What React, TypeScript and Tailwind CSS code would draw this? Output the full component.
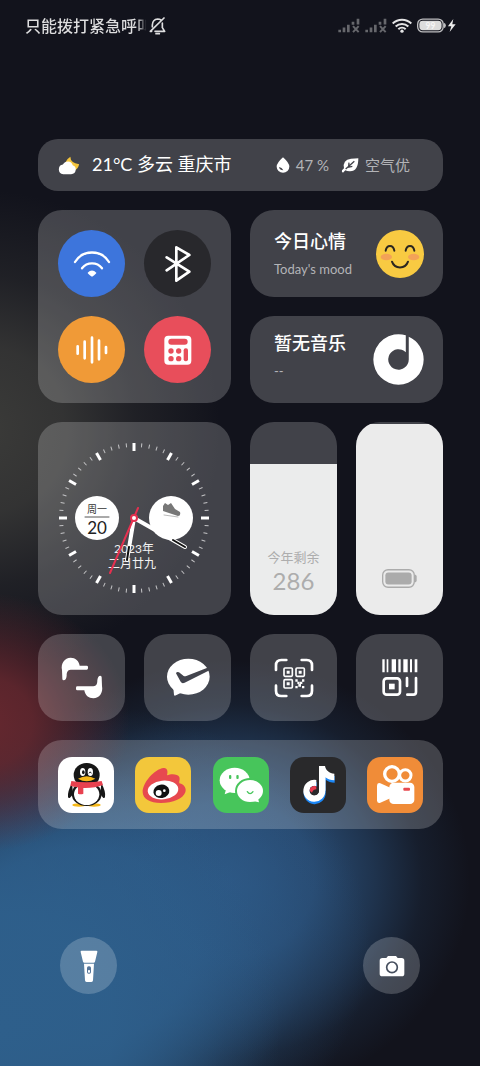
import React from "react";

const App = () => {
  return (
    <div className="flex min-h-screen flex-col bg-[#12131c] bg-[radial-gradient(150px_130px_at_-20px_722px,#66282f_0%,#66282fdd_35%,#66282f77_65%,#66282f00_100%),radial-gradient(240px_240px_at_-20px_430px,#3b3b39_0%,#3b3b39cc_35%,#3b3b3955_65%,#3b3b3900_100%),radial-gradient(280px_290px_at_0px_1030px,#2e5f8b_0%,#2e5f8be6_40%,#2e5f8b8c_60%,#2e5f8b33_80%,#2e5f8b00_100%),radial-gradient(290px_240px_at_80px_945px,#2d5b88_0%,#2d5b88e6_40%,#2d5b888c_60%,#2d5b8833_80%,#2d5b8800_100%),radial-gradient(240px_220px_at_230px_880px,#2c5480_0%,#2c5480d9_35%,#2c548080_60%,#2c54802b_80%,#2c548000_100%)] bg-no-repeat font-[Lato,'Noto_Sans_CJK_SC',sans-serif] text-white">
      <StatusBar />
      <main className="mt-[88px] flex flex-col gap-[19px] pr-[37px] pl-[38px]">
        <WeatherCard />
        <div className="grid grid-cols-2 gap-[19px]">
          <Toggles />
          <div className="flex flex-col gap-[19px]">
            <MoodCard />
            <MusicCard />
          </div>
          <ClockCard />
          <div className="grid grid-cols-2 gap-[19px]">
            <YearCard />
            <BatteryCard />
          </div>
        </div>
        <div className="grid grid-cols-4 gap-[19px]">
          {shortcuts.map((item) => (
            <button
              key={item.label}
              aria-label={item.label}
              className="flex h-[87px] items-center justify-center rounded-3xl bg-white/20"
            >
              <svg viewBox="-66 -66 132 132" className="size-11">
                {item.icon}
              </svg>
            </button>
          ))}
        </div>
        <nav className="flex h-[89px] items-center justify-between rounded-3xl bg-white/20 px-5">
          {apps.map((app) => (
            <a key={app.label} href="#" aria-label={app.label}>
              <svg viewBox="0 0 168 168" className="size-14">
                {app.icon}
              </svg>
            </a>
          ))}
        </nav>
      </main>
      <footer className="mt-auto flex justify-between px-[60px] pt-10 pb-[72px]">
        <button aria-label="手电筒" className="flex size-[57px] items-center justify-center rounded-full bg-white/20">
          <svg viewBox="-48 -48 96 96" className="size-8">
            <path d="M-22 -46H22Q26 -46 25 -42L18 -13Q17 -10 14 -10H-14Q-17 -10 -18 -13L-25 -42Q-26 -46 -22 -46Z" fill="#fff" />
            <path d="M-15 -7H15L12 43Q12 48 7 48H-7Q-12 48 -12 43Z" fill="#fff" />
            <rect x="-6" y="1" width="12" height="22" rx="5" fill="#56769a" />
            <rect x="-3" y="12" width="6" height="8" rx="2" fill="#fff" />
          </svg>
        </button>
        <button aria-label="相机" className="flex size-[57px] items-center justify-center rounded-full bg-white/20">
          <svg viewBox="-48 -48 96 96" className="size-8">
            <path
              d="M-29 -24H-17L-12 -30H12L17 -24H29Q37 -24 37 -16V23Q37 31 29 31H-29Q-37 31 -37 23V-16Q-37 -24 -29 -24Z"
              fill="#fff"
            />
            <circle cy="4" r="16" fill="#fff" stroke="#464f5e" strokeWidth="5" />
          </svg>
        </button>
      </footer>
    </div>
  );
};

const StatusBar = () => {
  return (
    <header className="flex h-[51px] items-center justify-between pr-6 pl-[25px]">
      <div className="flex items-center">
        <span className="bg-linear-to-r from-[#dededf] from-88% to-transparent to-95% bg-clip-text text-base font-medium whitespace-nowrap text-transparent">
          只能拨打紧急呼叫
        </span>
        <svg viewBox="0 0 51 54" className="-ml-1 h-[18px] w-[17px]" fill="none" stroke="#dededf" strokeWidth="5" strokeLinecap="round" strokeLinejoin="round">
          <path d="M10 30V24Q11 7 26 6Q32 6 36 9" />
          <path d="M40 18V32L47 43H18" />
          <path d="M45 3L4 43H8" />
          <path d="M21 50H31" />
        </svg>
      </div>
      <div className="flex items-center gap-[5px]">
        <SignalIcon />
        <SignalIcon />
        <svg viewBox="-30 -22 60 44" className="h-[15px] w-5" fill="none" stroke="#e4e4e5" strokeWidth="6">
          <path d="M-28 -6A40 40 0 0 1 28 -6" />
          <path d="M-19 3A27 27 0 0 1 19 3" />
          <path d="M-11 11A16 16 0 0 1 11 11" />
          <circle cy="17" r="5" fill="#e4e4e5" stroke="none" />
        </svg>
        <svg viewBox="0 0 116 44" className="h-[15px] w-[39px]">
          <rect x="2" y="3" width="76" height="38" rx="15" fill="none" stroke="#bebec0" strokeWidth="4" />
          <path d="M80 14Q86 16 86 22Q86 28 80 30Z" fill="#bebec0" />
          <rect x="7" y="8" width="66" height="28" rx="10" fill="#dcdcdc" />
          <text x="40" y="31" textAnchor="middle" fontSize="25" fontWeight="700" fill="#f6f6f6">
            99
          </text>
          <path d="M108 3L92 24H102L97 41L115 18H105Z" fill="#ececec" />
        </svg>
      </div>
    </header>
  );
};

const SignalIcon = () => (
  <svg viewBox="0 0 66 44" className="h-[15px] w-[22px]" fill="none" stroke="#66676c" strokeWidth="8">
    <path d="M5 42V35M18 42V28M31 42V20M45 20V11M60 19V2" />
    <path d="M45 24L62 42M62 24L45 42" strokeWidth="6" />
  </svg>
);

const WeatherCard = () => {
  return (
    <section className="flex h-[52px] items-center justify-between rounded-[20px] bg-white/20 pr-[33px] pl-5">
      <div className="flex items-center gap-3">
        <svg viewBox="0 0 64 56" className="h-[19px] w-[22px]">
          <path d="M36 2Q36 20 62 24Q58 42 42 44L22 18Q26 8 36 2Z" fill="#f5c53d" />
          <path d="M15 54Q2 52 2 39Q3 26 14 25Q19 16 29 16Q40 17 43 27Q52 30 52 40Q51 53 38 54Z" fill="#fff" />
        </svg>
        <span className="pb-0.5 text-lg">21°C 多云 重庆市</span>
      </div>
      <div className="flex items-center text-[15px] text-[#b3b4b7]">
        <svg viewBox="0 0 42 48" className="h-4 w-3.5">
          <path d="M21 1Q40 18 40 29A19 18 0 0 1 2 29Q2 18 21 1Z" fill="#fff" />
          <path d="M9 30Q11 40 22 40Q18 31 9 30Z" fill="#42434a" />
        </svg>
        <span className="ml-1.5">47 %</span>
        <svg viewBox="0 0 54 48" className="ml-3 h-4 w-[18px]">
          <path d="M52 4Q52 44 26 43Q18 43 13 40L6 47Q1 46 3 40L9 34Q4 8 30 5Q42 5 52 4Z" fill="#fff" />
          <path d="M14 36L40 13M23 28L24 17M20 31L34 28" stroke="#42434a" strokeWidth="4" fill="none" />
        </svg>
        <span className="ml-1.5">空气优</span>
      </div>
    </section>
  );
};

const Toggles = () => {
  return (
    <section className="grid h-[193px] grid-cols-[67px_67px] place-content-center gap-[19px] rounded-3xl bg-white/20">
      <button aria-label="无线网络" className="flex size-[67px] items-center justify-center rounded-full bg-[#3d75dc]">
        <svg viewBox="-60 -60 120 120" className="size-10" fill="none" stroke="#fff" strokeWidth="7" strokeLinecap="round">
          <path d="M-51 -6A60 60 0 0 1 51 -6" />
          <path d="M-30 13A38 38 0 0 1 30 13" />
          <path d="M-13 26Q0 13 13 26Q13 29 0 38Q-13 29 -13 26Z" fill="#fff" stroke="none" />
        </svg>
      </button>
      <button aria-label="蓝牙" className="flex size-[67px] items-center justify-center rounded-full bg-[#28282c]">
        <svg viewBox="-60 -60 120 120" className="size-10" fill="none" stroke="#fff" strokeWidth="8" strokeLinecap="round" strokeLinejoin="round">
          <path d="M-34 -20L34 23L-5 50V-50L34 -27L-34 19" />
        </svg>
      </button>
      <button aria-label="录音" className="flex size-[67px] items-center justify-center rounded-full bg-[#f09a37]">
        <svg viewBox="-60 -60 120 120" className="size-10" stroke="#fff" strokeWidth="8" strokeLinecap="round">
          <path d="M-43 -11V11M-22 -25V25M0 -37V37M21 -28V28M42 -9V9" />
        </svg>
      </button>
      <button aria-label="计算器" className="flex size-[67px] items-center justify-center rounded-full bg-[#e84e5b]">
        <svg viewBox="-60 -60 120 120" className="size-10" fill="#e84e5b">
          <rect x="-41" y="-43" width="81" height="87" rx="12" fill="#fff" />
          <rect x="-29" y="-34" width="58" height="18" rx="9" />
          <circle cx="-21" cy="3" r="8" />
          <circle cx="2" cy="3" r="8" />
          <circle cx="-21" cy="26" r="8" />
          <circle cx="2" cy="26" r="8" />
          <rect x="17" y="-5" width="13" height="39" rx="6" />
        </svg>
      </button>
    </section>
  );
};

const MoodCard = () => {
  return (
    <section className="flex h-[87px] items-center justify-between rounded-3xl bg-white/20 pr-[19px] pl-6">
      <div>
        <h2 className="text-lg leading-6 font-medium">今日心情</h2>
        <p className="mt-1.5 text-[13px] leading-5 text-[#b3b4b7]">Today's mood</p>
      </div>
      <svg viewBox="-72 -72 144 144" className="size-12" fill="none" strokeLinecap="round">
        <circle r="72" fill="#f8ca42" />
        <ellipse cx="-41" cy="9" rx="17" ry="10" fill="#f3a257" />
        <ellipse cx="41" cy="9" rx="17" ry="10" fill="#f3a257" />
        <path d="M-43 -10C-40 -29 -20 -29 -17 -10M17 -10C20 -29 40 -29 43 -10" stroke="#2b2620" strokeWidth="6" />
        <path d="M-24 23C-16 46 16 46 24 23" stroke="#2b2620" strokeWidth="6" />
      </svg>
    </section>
  );
};

const MusicCard = () => {
  return (
    <section className="flex h-[87px] items-center justify-between rounded-3xl bg-white/20 pr-[19px] pl-6">
      <div className="pb-2">
        <h2 className="text-lg leading-6 font-medium">暂无音乐</h2>
        <p className="mt-1.5 text-[13px] leading-5 text-[#b3b4b7]">--</p>
      </div>
      <svg viewBox="-77 -77 154 154" className="size-[51px]">
        <path d="M22 -73A76 76 0 0 0 -76 0A76 76 0 0 0 0 76A76 76 0 0 0 76 0A76 76 0 0 0 31 -69V0A31 31 0 1 1 22 -22Z" fill="#fff" />
      </svg>
    </section>
  );
};

const ClockCard = () => {
  return (
    <section className="flex h-[193px] items-start justify-start rounded-3xl bg-white/20">
      <svg viewBox="0 0 192 192" className="size-48" fill="none" strokeLinecap="round">
        {ticks.map((i) => (
          <path
            key={i}
            d={i % 5 === 0 ? "M96 21V29" : "M96 21V25"}
            stroke={i % 5 === 0 ? "#fff" : "#c4c4c6"}
            strokeWidth={i % 5 === 0 ? 3 : 1}
            strokeLinecap="butt"
            transform={`rotate(${i * 6} 96 96)`}
          />
        ))}
        <circle cx="59" cy="96" r="22" fill="#fff" />
        <text x="59" y="91" textAnchor="middle" fontSize="10" fill="#333">
          周一
        </text>
        <path d="M47 95H71" stroke="#555" strokeWidth="1" />
        <text x="59" y="112" textAnchor="middle" fontSize="17" fill="#222">
          20
        </text>
        <circle cx="133" cy="96" r="22" fill="#fff" />
        <path
          d="M125 84L127 81L130 83L133 81L137 87L142 90Q143 94 140 94L125 89Z"
          fill="#777"
        />
        <path d="M126 93L140 95" stroke="#bbb" strokeWidth="1" />
        <text x="96" y="131" textAnchor="middle" fontSize="12" fill="#f2f2f2">
          2023年
        </text>
        <text x="94" y="146" textAnchor="middle" fontSize="12" fill="#f2f2f2">
          二月廿九
        </text>
        <path d="M96 96L89 138" stroke="#fff" strokeWidth="4" />
        <path d="M91 125L89 138" stroke="#111" strokeWidth="2" />
        <path d="M96 96L147 125" stroke="#fff" strokeWidth="4" />
        <path d="M135 118L147 125" stroke="#111" strokeWidth="2" />
        <path d="M100 86L72 151" stroke="#e5304f" strokeWidth="2" />
        <circle cx="96" cy="96" r="3" fill="#fff" stroke="#e5304f" strokeWidth="2" />
      </svg>
    </section>
  );
};

const YearCard = () => {
  const daysLeft = 286;
  return (
    <section className="flex h-[193px] flex-col justify-end overflow-hidden rounded-3xl bg-white/20">
      <div
        className="flex flex-col items-center justify-end bg-[#ebecec] pb-5 text-[#adadad]"
        style={{ height: `${(daysLeft / 365) * 100}%` }}
      >
        <span className="text-[13px] leading-5">今年剩余</span>
        <span className="text-2xl leading-7">{daysLeft}</span>
      </div>
    </section>
  );
};

const BatteryCard = () => {
  const level = 99;
  return (
    <section className="flex h-[193px] flex-col justify-end overflow-hidden rounded-3xl bg-white/20">
      <div
        className="flex flex-col items-center justify-end bg-[#ebebeb] pb-[27px]"
        style={{ height: `${level}%` }}
      >
        <svg viewBox="0 0 104 56" className="h-[19px] w-[35px]">
          <rect x="2" y="2" width="94" height="52" rx="16" fill="none" stroke="#ababab" strokeWidth="4" />
          <rect x="10" y="10" width="78" height="36" rx="9" fill="#ababab" />
          <path d="M98 16Q103 17 103 22V34Q103 39 98 40Z" fill="#ababab" />
        </svg>
      </div>
    </section>
  );
};

interface IconItem {
  label: string;
  icon: React.ReactNode;
}

const ticks = Array.from({ length: 60 }, (_, i) => i);

const hand =
  "M-60 -24C-64 -44 -52 -61 -34 -61C-20 -61 -9 -52 -7 -37H14Q18 -37 18 -33V-29Q18 -25 14 -25H-34C-44 -24 -46 -17 -46 -7C-47 2 -50 7 -55 7Q-59 7 -59 2Z";

const shortcuts: IconItem[] = [
  {
    label: "传送门",
    icon: (
      <g fill="#fff">
        <path d={hand} />
        <path d={hand} transform="rotate(180)" />
      </g>
    )
  },
  {
    label: "微信支付",
    icon: (
      <>
        <mask id="pay-check">
          <rect x="-66" y="-66" width="132" height="132" fill="#fff" />
          <path d="M-36 -14Q-34 -20 -27 -17L-13 -6Q-10 -4 -5 -6L70 -35V-26L-10 14Q-18 18 -22 11Z" fill="#000" />
        </mask>
        <g mask="url(#pay-check)" fill="#fff">
          <ellipse cx="1" cy="-4" rx="64" ry="54" />
          <path d="M-44 30L-42 50Q-41 55 -36 52L-16 42Z" />
        </g>
      </>
    )
  },
  {
    label: "扫一扫",
    icon: (
      <g fill="none" stroke="#fff" strokeWidth="8" strokeLinecap="round">
        <path d="M-54 -24V-38Q-54 -54 -38 -54H-23M23 -54H38Q54 -54 54 -38V-24M54 23V38Q54 54 38 54H23M-23 54H-38Q-54 54 -54 38V23" />
        <g strokeWidth="5">
          <rect x="-30" y="-30" width="25" height="25" rx="3" />
          <rect x="6" y="-30" width="25" height="25" rx="3" />
          <rect x="-30" y="5" width="25" height="25" rx="3" />
        </g>
        <path
          d="M-22 -22h9v9h-9zM14 -22h9v9h-9zM-22 13h9v9h-9zM4 4h7v7h-7zM24 4h7v7h-7zM10 11h7v7h-7zM18 11h7v7h-7zM4 24h7v7h-7zM24 24h7v7h-7zM13 18h8v8h-8z"
          fill="#fff"
          stroke="none"
        />
      </g>
    )
  },
  {
    label: "付款码",
    icon: (
      <g fill="none" stroke="#fff" strokeWidth="8" strokeLinecap="round">
        <path
          d="M-53 -56h7v39h-7zM-40 -56h5v39h-5zM-25 -56h13v39h-13zM-5 -56h7v39h-7zM10 -56h13v39h-13zM30 -56h6v39h-6zM44 -56h8v39h-8z"
          fill="#fff"
          stroke="none"
        />
        <rect x="-49" y="1" width="49" height="49" rx="9" />
        <rect x="-33" y="17" width="17" height="17" fill="#fff" stroke="none" />
        <path d="M21 0V24M48 0V42Q48 50 40 50H22" />
      </g>
    )
  }
];

// the blue layer peeks out from under the white note
const note = "M87 27H105C107 40 118 49 133 50V70Q117 70 106 61V101A33 33 0 1 1 79 69V88A14 14 0 1 0 87 101Z";

const apps: IconItem[] = [
  {
    label: "QQ",
    icon: (
      <>
        <rect width="168" height="168" rx="42" fill="#fff" />
        <ellipse cx="63" cy="144" rx="20" ry="5" fill="#f6b818" />
        <ellipse cx="108" cy="144" rx="20" ry="5" fill="#f6b818" />
        <path d="M42 78Q28 104 30 120Q33 130 45 110M130 78Q144 104 141 120Q138 130 127 110" fill="#171717" />
        <ellipse cx="86" cy="111" rx="45" ry="36" fill="#171717" />
        <ellipse cx="86" cy="112" rx="38" ry="32" fill="#fff" />
        <rect x="47" y="18" width="78" height="72" rx="38" fill="#171717" />
        <path d="M40 72Q86 80 131 72L135 84Q110 94 76 93V110Q68 113 60 110V91Q46 90 37 86Z" fill="#e8414f" />
        <ellipse cx="74" cy="45" rx="8" ry="12" fill="#fff" />
        <ellipse cx="97" cy="45" rx="8" ry="12" fill="#fff" />
        <ellipse cx="76" cy="46" rx="4" ry="6" fill="#171717" />
        <path d="M93 49Q97 40 100 49" fill="none" stroke="#171717" strokeWidth="3" />
        <path d="M60 65Q86 50 112 65Q86 80 60 65Z" fill="#f6b818" />
      </>
    )
  },
  {
    label: "微博",
    icon: (
      <>
        <rect width="168" height="168" rx="42" fill="#f3c73b" />
        <path
          d="M23 106C22 78 58 36 86 33C98 32 99 45 96 55C108 50 128 50 133 60C136 68 131 74 133 79C148 82 155 94 151 106C144 126 114 138 78 138C44 138 24 126 23 106Z"
          fill="#e7494f"
        />
        <ellipse cx="84" cy="99" rx="46" ry="28" fill="#fff" transform="rotate(-6 84 99)" />
        <ellipse cx="79" cy="103" rx="24" ry="20" fill="#111" transform="rotate(-10 79 103)" />
        <circle cx="71" cy="108" r="9" fill="#fff" />
        <circle cx="88" cy="101" r="4" fill="#fff" />
      </>
    )
  },
  {
    label: "微信",
    icon: (
      <>
        <rect width="168" height="168" rx="42" fill="#47c55b" />
        <ellipse cx="65" cy="70" rx="45" ry="38" fill="#fff" />
        <path d="M40 94L35 112L58 103Z" fill="#fff" />
        <rect x="48" y="54" width="7" height="12" rx="3" fill="#47c55b" />
        <rect x="70" y="54" width="7" height="12" rx="3" fill="#47c55b" />
        <ellipse cx="111" cy="102" rx="42" ry="36" fill="#fff" stroke="#47c55b" strokeWidth="6" />
        <path d="M118 132L138 136L134 120Z" fill="#fff" />
        <path d="M103 104Q111 116 120 104" fill="none" stroke="#47c55b" strokeWidth="4" strokeLinecap="round" />
      </>
    )
  },
  {
    label: "抖音",
    icon: (
      <>
        <rect width="168" height="168" rx="42" fill="#29292b" />
        <path d={note} fill="#1b86f5" transform="translate(1 7)" />
        <path d={note} fill="#fff" />
        <circle cx="73" cy="101" r="14" fill="#29292b" />
        <path d="M87 60H106V101H87Z" fill="#fff" />
        <path d="M59 101A14 14 0 0 1 79 88V97Q70 97 66 107Z" fill="#e83a4e" />
      </>
    )
  },
  {
    label: "快手",
    icon: (
      <>
        <rect width="168" height="168" rx="42" fill="#f08c38" />
        <circle cx="75" cy="51" r="22" fill="none" stroke="#fff" strokeWidth="10" />
        <circle cx="115" cy="55" r="17" fill="none" stroke="#fff" strokeWidth="9" />
        <rect x="67" y="77" width="75" height="64" rx="13" fill="#fff" />
        <path d="M30 86Q30 76 40 79L70 92V124L40 137Q30 140 30 130Z" fill="#fff" />
        <rect x="109" y="92" width="20" height="9" rx="3" fill="#e7494f" />
      </>
    )
  }
];

export default App;
